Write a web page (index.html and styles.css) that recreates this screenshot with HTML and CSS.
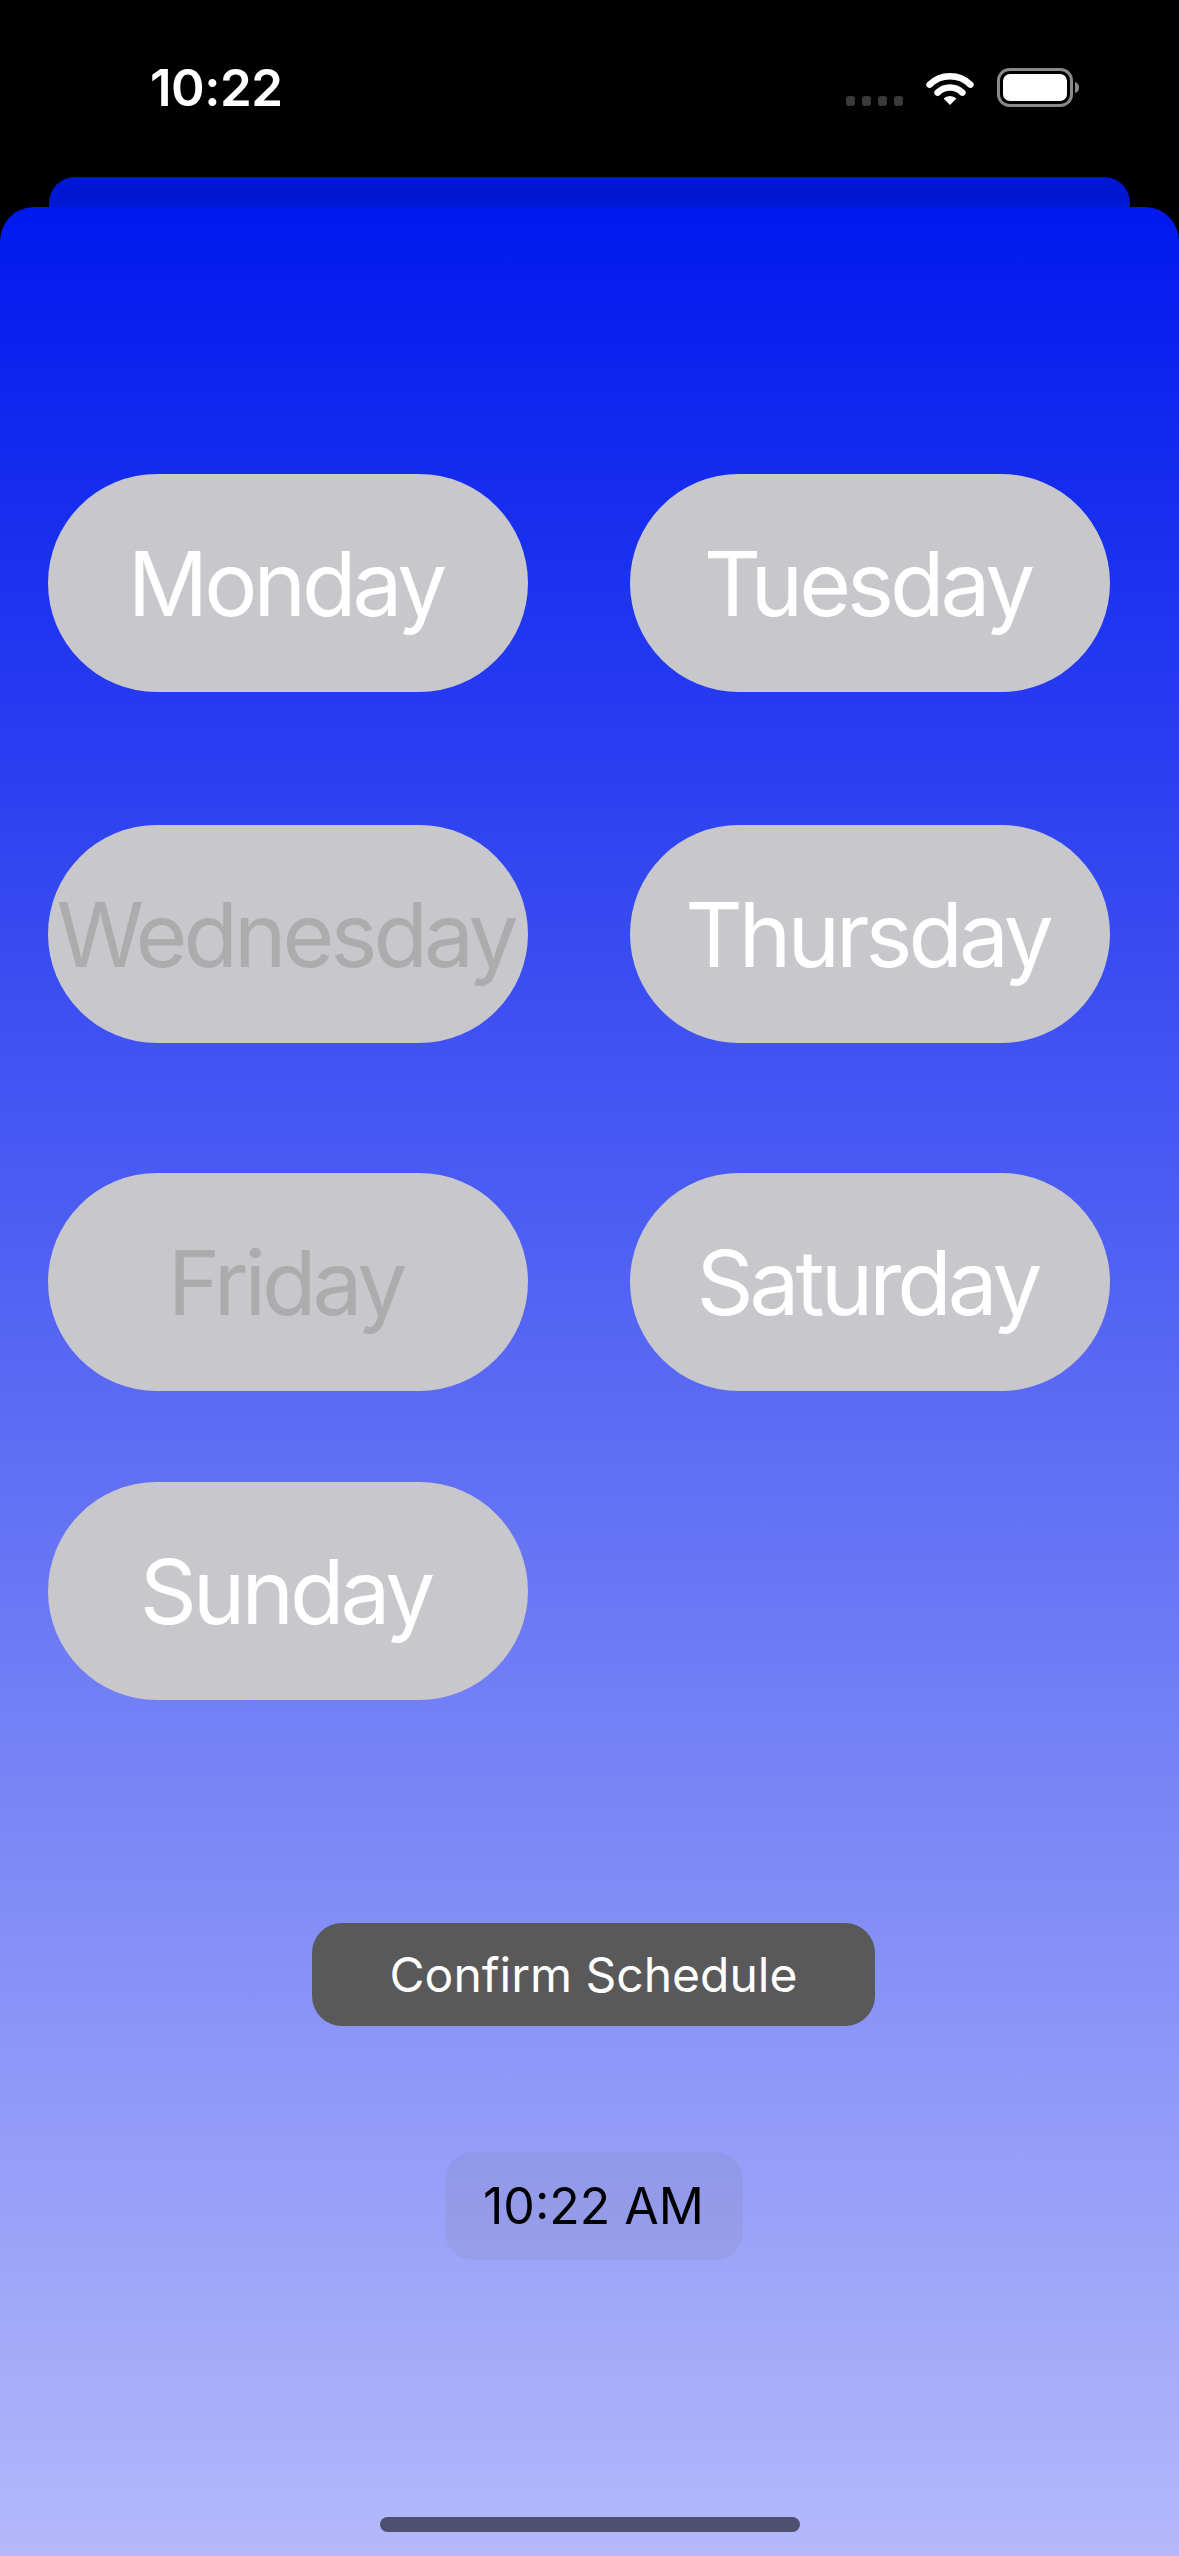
FILE: index.html
```html
<!DOCTYPE html>
<html lang="en">
<head>
<meta charset="utf-8">
<title>Schedule</title>
<link rel="stylesheet" href="styles.css">
</head>
<body>
<div class="phone">
  <header class="status">
    <span class="clock">10:22</span>
    <div class="status-icons">
      <div class="dots"><i></i><i></i><i></i><i></i></div>
      <svg class="wifi" width="50" height="36" viewBox="0 0 50 36">
        <path d="M4.6 14.6 A29 29 0 0 1 45.4 14.6" fill="none" stroke="#fff" stroke-width="6.5" stroke-linecap="round"/>
        <path d="M12.6 22.6 A17.5 17.5 0 0 1 37.4 22.6" fill="none" stroke="#fff" stroke-width="6.5" stroke-linecap="round"/>
        <path d="M25 35 L18.6 28.6 A9 9 0 0 1 31.4 28.6 Z" fill="#fff"/>
      </svg>
      <svg class="battery" width="84" height="40" viewBox="0 0 84 40">
        <rect x="1.5" y="1.5" width="73" height="36" rx="11" fill="none" stroke="#8a8a8e" stroke-width="3"/>
        <rect x="6" y="6" width="64" height="27" rx="7" fill="#fff"/>
        <path d="M78 14 Q82 15 82 19.5 Q82 24 78 25 Z" fill="#8a8a8e"/>
      </svg>
    </div>
  </header>

  <div class="sheet-back"></div>
  <main class="sheet">
    <div class="row row-1">
      <button class="day">Monday</button>
      <button class="day">Tuesday</button>
    </div>
    <div class="row row-2">
      <button class="day off">Wednesday</button>
      <button class="day">Thursday</button>
    </div>
    <div class="row row-3">
      <button class="day off">Friday</button>
      <button class="day">Saturday</button>
    </div>
    <div class="row row-4">
      <button class="day">Sunday</button>
    </div>

    <div class="actions">
      <button class="confirm">Confirm Schedule</button>
      <div class="time-pill">10:22 AM</div>
    </div>

    <div class="home-indicator"></div>
  </main>
</div>
</body>
</html>
```

FILE: styles.css
```css
* { box-sizing: border-box; }

html, body {
  margin: 0;
  padding: 0;
  background: #000;
}

body {
  font-family: Inter, "Noto Sans", "Liberation Sans", sans-serif;
  width: 1179px;
  height: 2556px;
  overflow: hidden;
}

.phone {
  display: flex;
  flex-direction: column;
  height: 2556px;
}

.status {
  height: 177px;
  display: flex;
  align-items: flex-start;
  justify-content: space-between;
  padding: 60px 98px 0 150px;
  color: #fff;
}

.clock {
  font-size: 51px;
  font-weight: 600;
  letter-spacing: -0.5px;
  line-height: 56px;
}

.status-icons {
  display: flex;
  align-items: center;
  gap: 0;
  margin-top: 8px;
}

.dots {
  display: flex;
  gap: 7px;
  margin-top: 26px;
  margin-right: 22px;
}

.dots i {
  width: 9px;
  height: 10px;
  border-radius: 3px;
  background: #3a3a3c;
}

.wifi { margin-right: 22px; }

.sheet-back {
  height: 60px;
  margin: 0 49px;
  flex-shrink: 0;
  border-radius: 26px 26px 0 0;
  background: #0018d4;
}

.sheet {
  position: relative;
  margin-top: -30px;
  flex: 1;
  border-radius: 34px 34px 0 0;
  background: linear-gradient(180deg, #0019ee 0%, #b3b9fa 100%);
  display: flex;
  flex-direction: column;
  padding-left: 48px;
}

.row {
  display: flex;
  gap: 102px;
}

.row-1 { margin-top: 267px; }
.row-2 { margin-top: 133px; }
.row-3 { margin-top: 130px; }
.row-4 { margin-top: 91px; }

.day {
  width: 480px;
  height: 218px;
  border: none;
  border-radius: 109px;
  background: #c7c7cc;
  color: #fff;
  font-family: Inter, "Noto Sans", sans-serif;
  font-size: 89px;
  font-weight: 400;
  letter-spacing: -4px;
  white-space: nowrap;
  display: flex;
  align-items: center;
  justify-content: center;
  padding: 0 5px 0 0;
  overflow: visible;
}

.day.off { color: #acacac; }

.actions {
  display: flex;
  flex-direction: column;
  align-items: center;
  margin-left: -48px;
  padding-left: 8px;
}

.confirm {
  margin-top: 223px;
  width: 563px;
  height: 103px;
  border: none;
  border-radius: 30px;
  background: #595959;
  color: #fff;
  font-family: Inter, "Noto Sans", sans-serif;
  font-size: 48px;
  font-weight: 400;
  padding: 0;
}

.time-pill {
  margin-top: 126px;
  width: 298px;
  height: 108px;
  border-radius: 28px;
  background: rgba(118, 118, 128, 0.12);
  color: #000;
  font-size: 50px;
  display: flex;
  align-items: center;
  justify-content: center;
}

.home-indicator {
  position: absolute;
  left: 380px;
  bottom: 24px;
  width: 420px;
  height: 15px;
  border-radius: 8px;
  background: #4e5070;
}
```
